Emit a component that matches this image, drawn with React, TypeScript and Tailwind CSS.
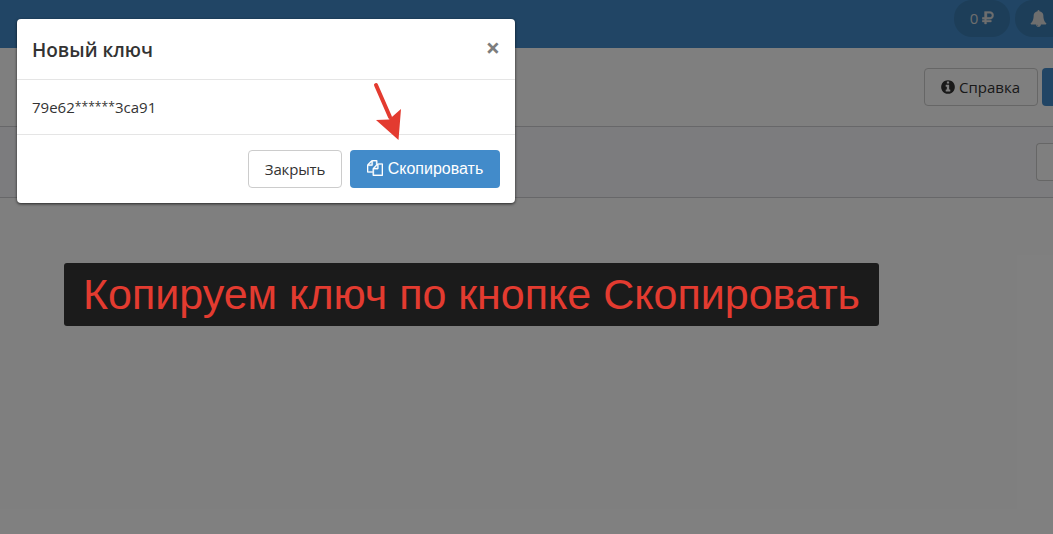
const CopyIcon = () => {
    return (
        <svg viewBox="0 0 1792 1792" className="w-4 h-4 mb-0.5 fill-current stroke-current shrink-0" strokeWidth="40">
            <path d="M1696 384q40 0 68 28t28 68v1216q0 40-28 68t-68 28h-960q-40 0-68-28t-28-68v-288h-544q-40 0-68-28t-28-68v-672q0-40 20-88t48-76l408-408q28-28 76-48t88-20h416q40 0 68 28t28 68v328q68-40 128-40h416zm-544 213l-299 299h299v-299zm-640-384l-299 299h299v-299zm196 647l316-316v-416h-384v416q0 40-28 68t-68 28h-416v640h512v-256q0-40 20-88t48-76zm956 804v-1152h-384v416q0 40-28 68t-68 28h-416v640h896z" />
        </svg>
    )
}

const BellIcon = () => {
    return (
        <svg viewBox="0 0 1792 1792" className="w-[17px] h-[17px] fill-current shrink-0">
            <path d="M912 1696q0-16-16-16-59 0-101.5-42.5t-42.5-101.5q0-16-16-16t-16 16q0 73 51.5 124.5t124.5 51.5q16 0 16-16zm816-288q0 52-38 90t-90 38h-448q0 106-75 181t-181 75-181-75-75-181h-448q-52 0-90-38t-38-90q50-42 91-88t85-119.5 74.5-158.5 50-206 19.5-260q0-152 117-282.5t307-158.5q-8-19-8-39 0-40 28-68t68-28 68 28 28 68q0 20-8 39 190 28 307 158.5t117 282.5q0 139 19.5 260t50 206 74.5 158.5 85 119.5 91 88z" />
        </svg>
    )
}

const RubleIcon = () => {
    return (
        <svg viewBox="122 0 1280 1792" className="w-3 h-4 mb-0.5 fill-current stroke-current shrink-0" strokeWidth="40">
            <path d="M1201 599q0-100-65-162t-171-62h-320v448h320q106 0 171-62t65-162zm193 0q0 193-126.500 315t-326.500 122h-340v118h505q14 0 23 9t9 23v128q0 14-9 23t-23 9h-505v192q0 14-9.500 23t-22.500 9h-167q-14 0-23-9t-9-23v-192h-224q-14 0-23-9t-9-23v-128q0-14 9-23t23-9h224v-118h-224q-14 0-23-9t-9-23v-149q0-13 9-22.500t23-9.500h224v-629q0-14 9-23t23-9h539q200 0 326.500 122t126.500 315z" />
        </svg>
    )
}

const InfoIcon = () => {
    return (
        <svg viewBox="0 0 1792 1792" className="w-4 h-4 fill-current shrink-0">
            <path d="M1152 1376v-160q0-14-9-23t-23-9h-96v-512q0-14-9-23t-23-9h-320q-14 0-23 9t-9 23v160q0 14 9 23t23 9h96v320h-96q-14 0-23 9t-9 23v160q0 14 9 23t23 9h448q14 0 23-9t9-23zm-128-896v-160q0-14-9-23t-23-9h-192q-14 0-23 9t-9 23v160q0 14 9 23t23 9h192q14 0 23-9t9-23zm640 416q0 209-103 385.5t-279.5 279.5-385.5 103-385.5-103-279.5-279.5-103-385.5 103-385.5 279.5-279.5 385.5-103 385.5 103 279.5 279.5 103 385.5z" />
        </svg>
    )
}

const Page = () => {
    return (
        <div className="h-full bg-white">
            <header className="h-12 bg-[#428bca] flex justify-end items-start gap-[5px] text-[#dcdcdc]">
                <div className="w-14 h-[37px] rounded-[18px] bg-[#3b7cb2] flex items-center justify-center gap-1">
                    <span className="text-[15px]">0</span>
                    <RubleIcon />
                </div>
                <div className="w-[38px] h-[37px] rounded-l-[18px] bg-[#3b7cb2] flex items-center pl-[15px]">
                    <BellIcon />
                </div>
            </header>
            <div className="h-[79px] border-b border-[#cfcfd2] flex items-center justify-end gap-1">
                <button className="w-[114px] h-[38px] pr-0.5 border border-[#ccc] rounded-sm flex items-center justify-center gap-[3px] text-[#333]">
                    <InfoIcon />
                    <span className="text-[15px] leading-5">Справка</span>
                </button>
                <div className="w-[11px] h-[38px] rounded-l-sm bg-[#428bca]"></div>
            </div>
            <div className="h-[71px] bg-[#f9f9fc] border-b border-[#cfcfd2] flex items-center justify-end">
                <div className="w-[17px] h-[38px] bg-white border border-r-0 border-[#ccc] rounded-l-sm"></div>
            </div>
        </div>
    )
}

const Modal = () => {
    return (
        <div className="absolute left-[17px] top-[19px] w-[498px] bg-white rounded-sm shadow-[0_1px_3px_rgba(0,0,0,0.7)] text-[#333]">
            <div className="h-[61px] px-[15px] border-b border-[#e5e5e5] flex items-center justify-between">
                <h4 className="pt-[3px] text-[19px] font-semibold">Новый ключ</h4>
                <button className="pb-[3px] text-[25px] leading-none font-bold text-[#7d7d7d]">×</button>
            </div>
            <div className="h-[54px] px-[15px] flex items-center">
                <p className="text-[15px] leading-5">79e62<span className="text-xs leading-none align-[2px] tracking-[0.1px]">******</span>3ca91</p>
            </div>
            <div className="h-[69px] px-[15px] border-t border-[#e5e5e5] flex items-center justify-end gap-2">
                <button className="w-[94px] h-[38px] border border-[#ccc] rounded-sm text-[15px] tracking-[-0.15px]">Закрыть</button>
                <button className="w-[150px] h-[38px] rounded-sm bg-[#428bca] text-white flex items-center justify-center gap-[5px] font-['Liberation_Sans',sans-serif] text-base">
                    <CopyIcon />
                    <span>Скопировать</span>
                </button>
            </div>
        </div>
    )
}

export default function App() {
    return (
        <div className="relative w-full h-[534px] overflow-hidden font-['Open_Sans',sans-serif]">
            <Page />
            <div className="absolute inset-0 bg-black/50"></div>
            <Modal />
            <svg viewBox="0 0 30 60" className="absolute left-[372px] top-[81px] w-[30px] h-[60px]">
                <path d="M4 4L18 36" stroke="#e33b30" strokeWidth="4" strokeLinecap="round" />
                <path d="M26.500 59L4 39L17 38.500L29 28Z" fill="#e33b30" />
            </svg>
            <div className="absolute left-16 top-[263px] w-[815px] h-[63px] rounded-[3px] bg-[#1b1b1b] flex items-center justify-center font-['Liberation_Sans',sans-serif] text-[43px] text-[#e33b30] whitespace-nowrap">
                Копируем ключ по кнопке Скопировать
            </div>
        </div>
    )
}
